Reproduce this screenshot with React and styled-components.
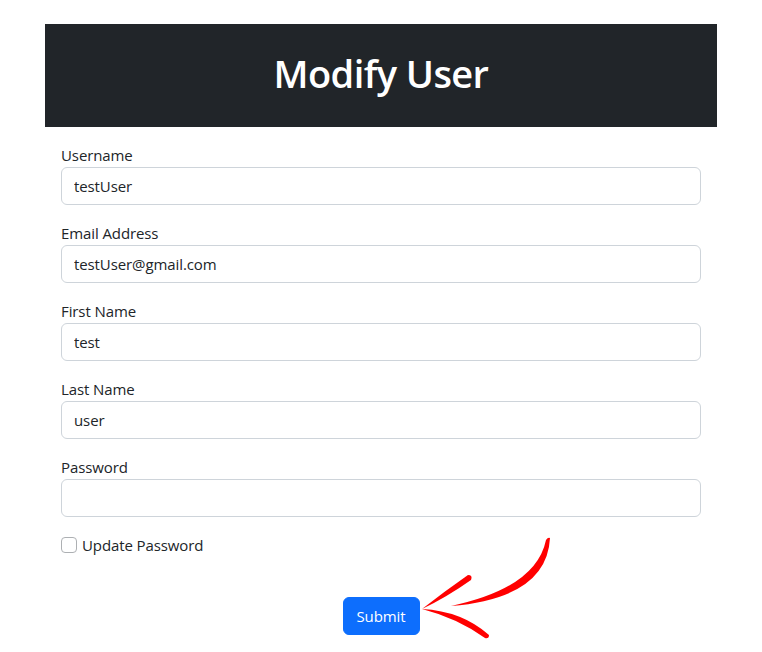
import React from "react";
import styled, { createGlobalStyle } from "styled-components";

const Global = createGlobalStyle`
  html, body { margin: 0; padding: 0; background: #ffffff; }
  body {
    font-family: "Open Sans", "Noto Sans", sans-serif;
    font-size: 16px;
    line-height: 24px;
    color: #212529;
  }
  * { box-sizing: border-box; }
`;

const Page = styled.div`
  width: 762px;
  height: 652px;
  padding-top: 24px;
  display: flex;
  justify-content: center;
  position: relative;
  overflow: hidden;
`;

const Panel = styled.div`
  width: 672px;
  display: flex;
  flex-direction: column;
`;

const Header = styled.header`
  background: #212529;
  height: 103px;
  padding-top: 25px;
  display: flex;
  justify-content: center;
`;

const Title = styled.h1`
  margin: 0;
  color: #ffffff;
  font-family: "Open Sans", "Noto Sans", sans-serif;
  font-weight: 600;
  font-size: 38px;
  line-height: 48px;
  letter-spacing: -0.6px;
`;

const Form = styled.form`
  padding: 16px 16px 0;
  display: flex;
  flex-direction: column;
`;

const Group = styled.div`
  display: flex;
  flex-direction: column;
  margin-bottom: 16px;
`;

const Label = styled.label`
  display: block;
  font-size: 15px;
  line-height: 24px;
  letter-spacing: -0.1px;
`;

const Input = styled.input`
  display: block;
  width: 100%;
  height: 38px;
  padding: 6px 12px;
  border: 1px solid #ced4da;
  border-radius: 6px;
  font-family: inherit;
  font-size: 15px;
  color: #212529;
  background: #fff;
  letter-spacing: -0.1px;
  outline: none;
`;

const CheckRow = styled.div`
  display: flex;
  align-items: center;
  height: 24px;
  gap: 5px;
`;

const Checkbox = styled.span`
  width: 16px;
  height: 16px;
  border: 1px solid #adb0b3;
  border-radius: 4px;
  background: #fff;
  flex-shrink: 0;
`;

const CheckLabel = styled.span`
  font-size: 15px;
  letter-spacing: -0.1px;
`;

const Actions = styled.div`
  display: flex;
  justify-content: center;
  margin-top: 40px;
`;

const Button = styled.button`
  background: #0d6efd;
  color: #ffffff;
  border: 1px solid #0d6efd;
  border-radius: 6px;
  height: 38px;
  width: 77px;
  padding: 0;
  font-family: inherit;
  font-size: 15px;
  letter-spacing: -0.1px;
  cursor: pointer;
`;

const ArrowSvg = styled.svg`
  position: absolute;
  left: 0;
  top: 0;
  pointer-events: none;
`;

const fields = [
  { label: "Username", value: "testUser" },
  { label: "Email Address", value: "testUser@gmail.com" },
  { label: "First Name", value: "test" },
  { label: "Last Name", value: "user" },
  { label: "Password", value: "" },
];

export default function App() {
  return (
    <>
      <Global />
      <Page>
        <Panel>
          <Header>
            <Title>Modify User</Title>
          </Header>
          <Form onSubmit={(e) => e.preventDefault()}>
            {fields.map((f) => (
              <Group key={f.label}>
                <Label>{f.label}</Label>
                <Input defaultValue={f.value} type="text" />
              </Group>
            ))}
            <CheckRow>
              <Checkbox />
              <CheckLabel>Update Password</CheckLabel>
            </CheckRow>
            <Actions>
              <Button type="submit">Submit</Button>
            </Actions>
          </Form>
        </Panel>
        <ArrowSvg width="762" height="652" viewBox="0 0 762 652">
          <path
            d="M550,538 Q547,598 451,606 Q536,588 546,540 Q548,537 550,538 Z"
            fill="#ff0000"
          />
          <path
            d="M422,609 Q445,591 468,575 Q473,575 471,580 Q447,597 422,609 Z"
            fill="#ff0000"
          />
          <path
            d="M422,609 Q462,611 489,635 Q489,639 485,638 Q457,618 422,609 Z"
            fill="#ff0000"
          />
        </ArrowSvg>
      </Page>
    </>
  );
}
